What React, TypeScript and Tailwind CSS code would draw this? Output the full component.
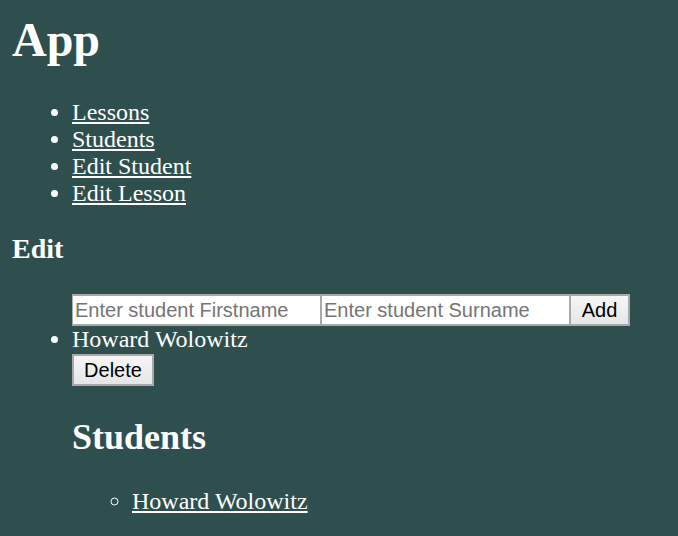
const links = ["Lessons", "Students", "Edit Student", "Edit Lesson"];

const inputCls =
  "h-[32px] w-[249px] border-x border-y-2 border-[#a9a9a9] bg-white pl-[2px] font-['Liberation_Sans',Arial,sans-serif] text-[20px] text-black placeholder:text-[#757575] outline-none";

const btnCls =
  "h-[32px] border-2 border-[#a9a9a9] bg-gradient-to-b from-[#f6f6f6] to-[#e6e6e6] font-['Liberation_Sans',Arial,sans-serif] text-[20px] text-black";

export default function App() {
  return (
    <div className="min-h-screen bg-[#2f4f4f] p-3 font-['Liberation_Serif','Times_New_Roman',serif] text-white">
      <h1 className="text-[48px] font-bold leading-[55px]">App</h1>

      <ul className="mt-[32px] list-disc pl-[60px] text-[24px] leading-[27px]">
        {links.map((l) => (
          <li key={l}>
            <a href="#" className="text-white underline">
              {l}
            </a>
          </li>
        ))}
      </ul>

      <h3 className="mt-[26px] text-[28px] font-bold leading-[32px]">Edit</h3>

      <ul className="mt-[29px] list-disc pl-[60px] text-[24px] leading-[27px]">
        <div className="flex">
          <input className={inputCls} placeholder="Enter student Firstname" />
          <input className={inputCls} placeholder="Enter student Surname" />
          <button className={btnCls + " w-[60px] border-l"}>Add</button>
        </div>
        <li>
          Howard Wolowitz
          <button className={btnCls + " mt-[1px] block w-[82px]"}>Delete</button>
          <h2 className="mt-[30px] text-[36px] font-bold leading-[42px]">Students</h2>
          <ul className="mt-[30px] list-[circle] pl-[60px]">
            <li>
              <a href="#" className="text-white underline">
                Howard Wolowitz
              </a>
            </li>
          </ul>
        </li>
      </ul>
    </div>
  );
}
